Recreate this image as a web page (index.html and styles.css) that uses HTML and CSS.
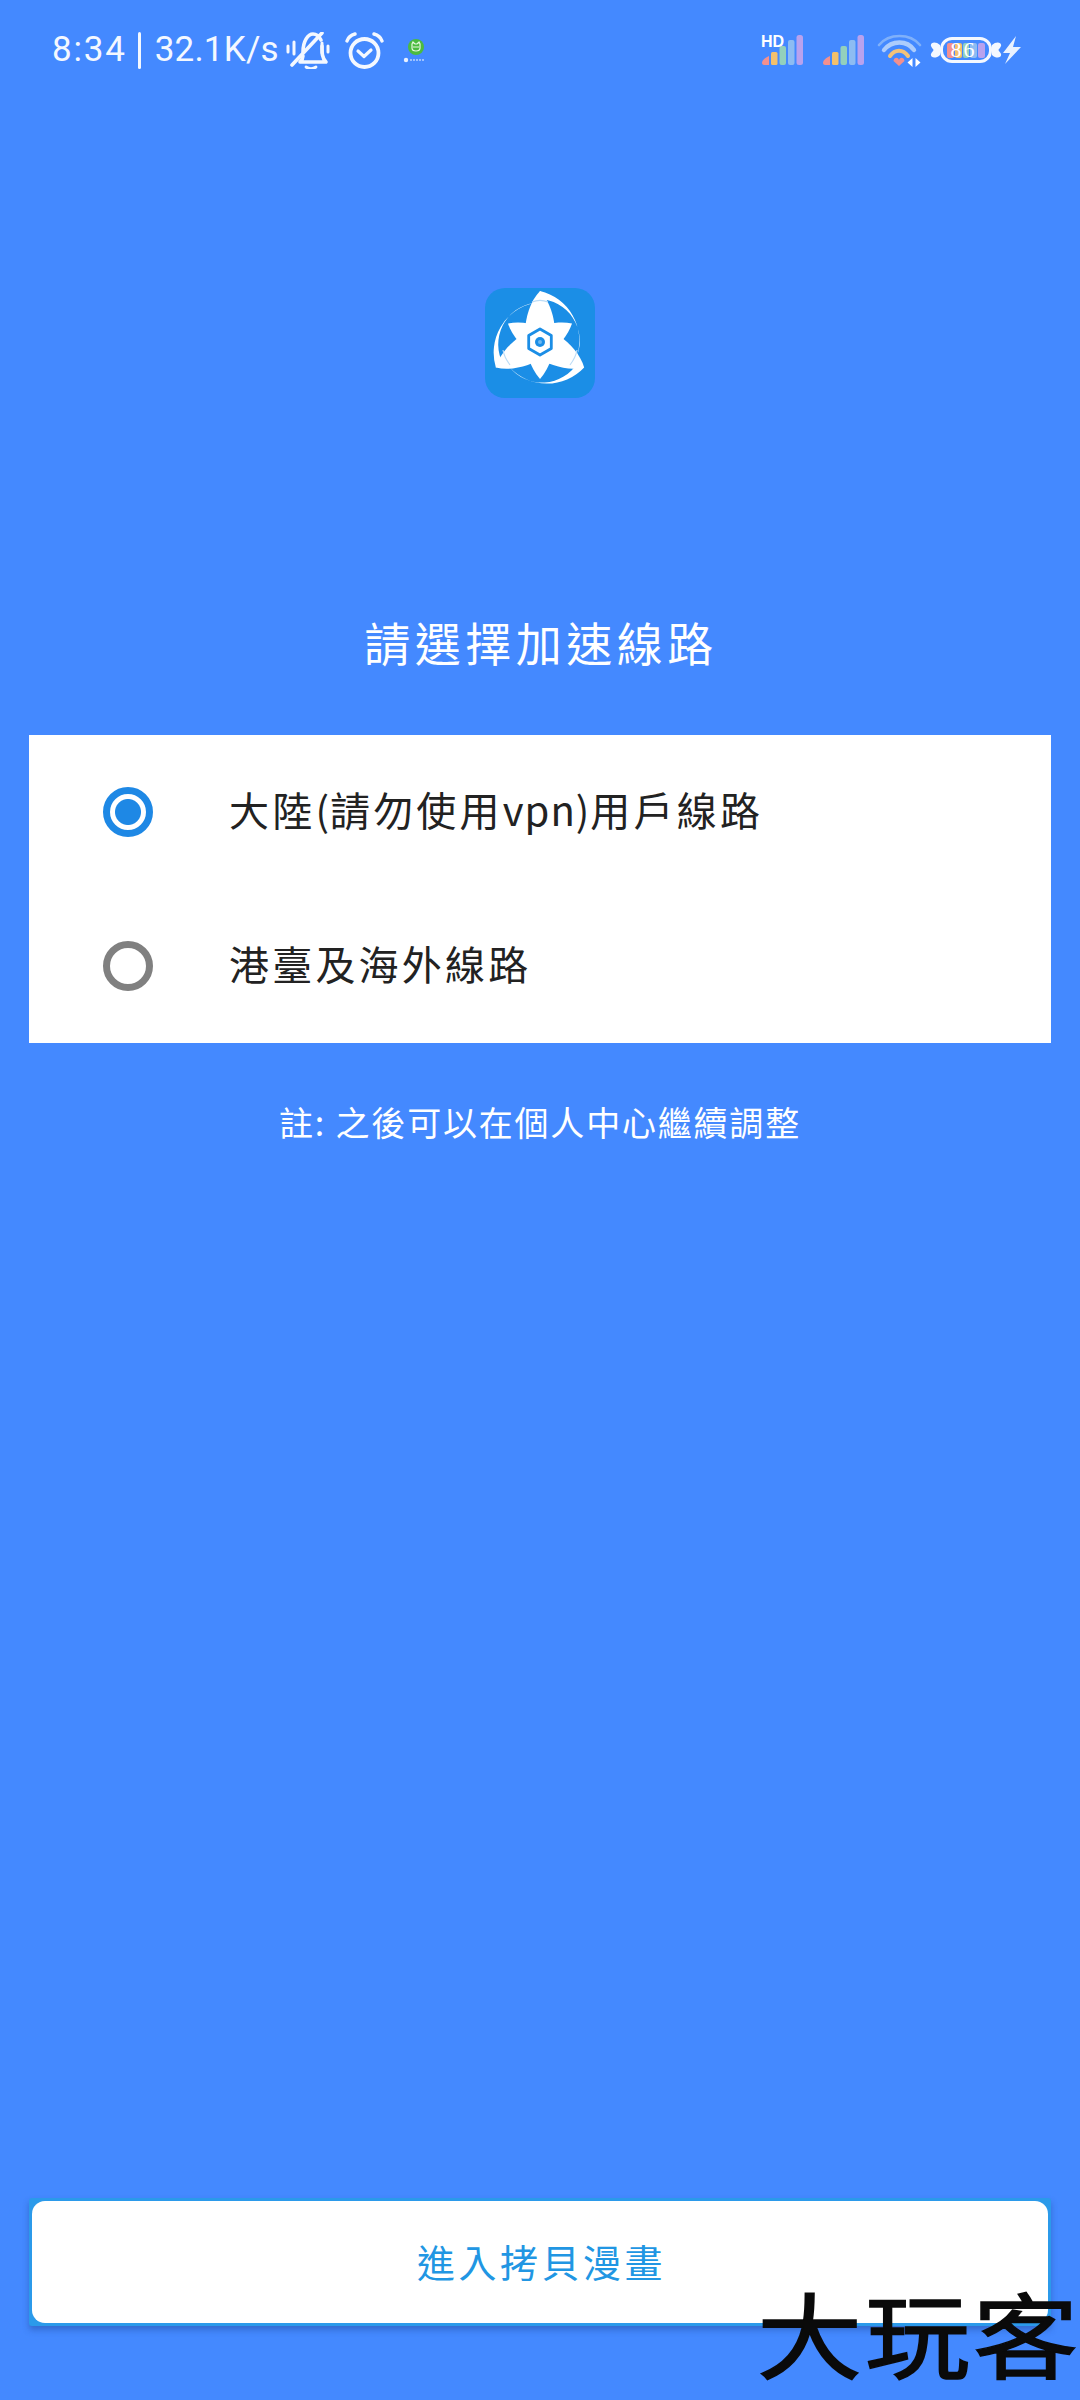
FILE: index.html
```html
<!DOCTYPE html>
<html lang="zh-Hant">
<head>
<meta charset="UTF-8">
<title>請選擇加速線路</title>
<link rel="stylesheet" href="styles.css">
</head>
<body>
<main class="screen">

<header class="statusbar">
  <div class="status-left">
    <span class="clock">8:34</span>
    <span class="divider"></span>
    <span class="speed">32.1K/s</span>
    <svg class="ico-bell" viewBox="0 0 44 37" fill="none" stroke="#f4f8ff" stroke-width="3.600" stroke-linecap="round" stroke-linejoin="round">
      <path d="M17 20 C17 9 22 2 27 2 C30 2 33 4 35 8"/>
      <path d="M36 14 C36 21 36 26 40 30 H14 C16 28 17 26 17 24"/>
      <path d="M20 35 C23 37 27 37 30 35" stroke-width="2.800"/>
      <path d="M6 33 L36 1"/>
      <path d="M2 14 V20 M8 10 V22 M36 11 V21 M42 14 V20" stroke-width="3"/>
    </svg>
    <svg class="ico-alarm" viewBox="0 0 39 37" fill="none" stroke="#f4f8ff" stroke-linecap="round" stroke-linejoin="round">
      <circle cx="19.500" cy="21" r="14" stroke-width="3.800"/>
      <path d="M13 19 L19 24.500 L26 18" stroke-width="3.200"/>
      <path d="M2 9 C3 6 6 3 10 2 M29 2 C33 3 36 6 37 9" stroke-width="3.400"/>
    </svg>
    <svg class="ico-app" viewBox="0 0 24 28">
      <circle cx="13" cy="8" r="8" fill="#4cbb3f"/>
      <path d="M9 5 L10 3 L12 5 H14 L16 3 L17 5 V9 C17 11 15 12 13 12 C11 12 9 11 9 9 Z M10 8 H16" fill="none" stroke="#e8f8e0" stroke-width="1.200"/>
      <circle cx="3" cy="21" r="2.200" fill="#e8f0ff"/>
      <path d="M7 21 H22" stroke="#b8d2ff" stroke-width="1.500" stroke-dasharray="2 1"/>
    </svg>
  </div>
  <div class="status-right">
    <div class="signal signal-hd">
      <span class="hd">HD</span>
      <svg viewBox="0 0 41 30">
        <path d="M0 28 C0 25 3 23 7 21 V30 H2 C1 30 0 29 0 28 Z" fill="#f2908f"/>
        <rect x="9" y="17" width="6.500" height="13" rx="1.500" fill="#f3c06c"/>
        <rect x="17.500" y="11" width="6.500" height="19" rx="2" fill="#93d0bc"/>
        <rect x="26" y="5" width="6.500" height="25" rx="2" fill="#8dbcf2"/>
        <rect x="34.500" y="0" width="6.500" height="30" rx="2.500" fill="#b9a2ee"/>
      </svg>
    </div>
    <div class="signal">
      <svg viewBox="0 0 41 30">
        <path d="M0 28 C0 25 3 23 7 21 V30 H2 C1 30 0 29 0 28 Z" fill="#f2908f"/>
        <rect x="9" y="17" width="6.500" height="13" rx="1.500" fill="#f3c06c"/>
        <rect x="17.500" y="11" width="6.500" height="19" rx="2" fill="#93d0bc"/>
        <rect x="26" y="5" width="6.500" height="25" rx="2" fill="#8dbcf2"/>
        <rect x="34.500" y="0" width="6.500" height="30" rx="2.500" fill="#b9a2ee"/>
      </svg>
    </div>
    <svg class="ico-wifi" viewBox="0 0 45 33" fill="none" stroke-linecap="round">
      <path d="M2 11 C12 -1 33 -1 43 11" stroke="#7fb0fa" stroke-width="2.600"/>
      <path d="M7 16 C15 6 30 6 37 16" stroke="#acccfc" stroke-width="4.400"/>
      <path d="M13 22 C18 15 26 15 31 22" stroke="#f3c27a" stroke-width="4"/>
      <path d="M22 32 L16.500 27 C17 23 21 23 22 26 C23 23 27 23 27.500 27 Z" fill="#f2908f"/>
      <path d="M35.500 24 V33 L30.500 28.500 Z M38.500 24 V33 L43.500 28.500 Z" fill="#fff"/>
    </svg>
    <div class="battery">
      <svg class="wrap" viewBox="0 0 10 16"><path d="M10 3 C6 -1 0 0 1 4 C1.500 6 3.500 7 3.500 8 C3.500 9 1.500 10 1 12 C0 16 6 17 10 13 Z" fill="#f4f8ff"/></svg>
      <div class="battery-body">
        <i class="stripe s1"></i><i class="stripe s2"></i><i class="stripe s3"></i><i class="stripe s4"></i><i class="stripe s5"></i>
        <span class="level">86</span>
      </div>
      <svg class="wrap" viewBox="0 0 10 16"><path d="M0 3 C4 -1 10 0 9 4 C8.500 6 6.500 7 6.500 8 C6.500 9 8.500 10 9 12 C10 16 4 17 0 13 Z" fill="#f4f8ff"/></svg>
    </div>
    <svg class="ico-bolt" viewBox="0 0 20 28">
      <path d="M14 0 L1 17 L8 17 L3 28 L19 11 L11 11 Z" fill="#eaf2ff"/>
    </svg>
  </div>
</header>

<div class="logo">
  <svg viewBox="0 0 110 110" width="110" height="110">
    <rect width="110" height="110" rx="20" fill="#1b8ee6"/>
    <g fill="#fff">
      <path d="M55 3 A51 51 0 0 1 92 68 A42 42 0 0 0 54 11 Z"/>
      <path d="M55 3 A51 51 0 0 1 92 68 A42 42 0 0 0 54 11 Z" transform="rotate(120 55 54)"/>
      <path d="M55 3 A51 51 0 0 1 92 68 A42 42 0 0 0 54 11 Z" transform="rotate(240 55 54)"/>
      <!-- each petal is long on one end (reaches a crescent) and short on the other -->
      <path d="M55 3 C75 24 75 68 55 91 C35 68 35 24 55 3 Z"/>
      <path d="M55 3 C75 24 75 68 55 91 C35 68 35 24 55 3 Z" transform="rotate(120 55 54)"/>
      <path d="M55 3 C75 24 75 68 55 91 C35 68 35 24 55 3 Z" transform="rotate(240 55 54)"/>
    </g>
    <path d="M47 14 C52 12 58 12 63 14 M92 62 C91 68 88 73 85 77 M25 77 C22 73 19 68 18 62" fill="none" stroke="#bcdcf6" stroke-width="1.200"/>
    <path d="M55 41 L66.300 47.500 L66.300 60.500 L55 67 L43.700 60.500 L43.700 47.500 Z" fill="#fff" stroke="#1b8ee6" stroke-width="2.800" stroke-linejoin="round"/>
    <circle cx="55" cy="54" r="5" fill="#1b8ee6"/>
    <circle cx="55" cy="54" r="2" fill="#6db8f0"/>
  </svg>
</div>

<h1 class="title">請選擇加速線路</h1>

<section class="lines">
  <div class="line">
    <span class="radio radio-on"></span>
    <span class="line-name">大陸<span class="latin">(</span>請勿使用<span class="latin">vpn)</span>用戶線路</span>
  </div>
  <div class="line">
    <span class="radio"></span>
    <span class="line-name">港臺及海外線路</span>
  </div>
</section>

<p class="note">註: 之後可以在個人中心繼續調整</p>

<button type="button" class="enter"><span class="enter-inner">進入拷貝漫畫</span></button>

<div class="watermark"><span>大</span><span>玩</span><span>客</span></div>

</main>
</body>
</html>
```

FILE: styles.css
```css
* {
  box-sizing: border-box;
}

body {
  margin: 0;
  background: #4489ff;
  font-family: "Noto Sans CJK TC", "Noto Sans", sans-serif;
}

.screen {
  position: relative;
  display: flex;
  flex-direction: column;
  width: 1080px;
  height: 2400px;
  overflow: hidden;
  background: #4489ff;
}

/* status bar */
.statusbar {
  display: flex;
  justify-content: space-between;
  align-items: center;
  height: 100px;
  padding: 0 58px 0 52px;
  color: #f4f8ff;
}

.status-left,
.status-right {
  display: flex;
  align-items: center;
}

.clock,
.speed {
  font-family: Roboto, "Noto Sans", sans-serif;
  font-size: 35px;
  line-height: 40px;
}

.clock {
  letter-spacing: 1.800px;
}

.speed {
  letter-spacing: 0.200px;
}

.divider {
  width: 3px;
  height: 37px;
  margin: 0 14px 0 11px;
  background: #f4f8ff;
  border-radius: 2px;
}

.ico-bell {
  width: 44px;
  height: 37px;
  margin-left: 7px;
}

.ico-alarm {
  width: 39px;
  height: 37px;
  margin-left: 15px;
}

.ico-app {
  width: 24px;
  height: 28px;
  margin: 6px 0 0 19px;
}

.signal {
  position: relative;
  width: 43px;
  height: 30px;
  margin-right: 18px;
}

.signal svg {
  display: block;
  width: 43px;
  height: 30px;
}

.hd {
  position: absolute;
  left: 0;
  top: -1px;
  font-family: "Liberation Sans", sans-serif;
  font-size: 16px;
  font-weight: 700;
  line-height: 16px;
  color: #fff;
}

.ico-wifi {
  width: 45px;
  height: 33px;
  margin: 0 8px 0 -6px;
}

.battery {
  display: flex;
  align-items: center;
  width: 72px;
  height: 26px;
}

.wrap {
  flex: none;
  width: 10px;
  height: 16px;
}

.battery-body {
  position: relative;
  display: flex;
  flex: 1;
  gap: 1px;
  align-items: center;
  height: 26px;
  padding: 0 4px;
  border: 3px solid #f4f8ff;
  border-radius: 12px;
}

.stripe {
  flex: 1;
  height: 15px;
  border-radius: 2px;
}

.s1 { background: #f2908f; }
.s2 { background: #f3c06c; }
.s3 { background: #93d0bc; }
.s4 { background: #8dbcf2; }
.s5 { background: #b9a2ee; }

.level {
  position: absolute;
  left: 0;
  right: 5px;
  top: -3px;
  font-family: "Liberation Serif", serif;
  font-size: 22px;
  line-height: 26px;
  letter-spacing: 2px;
  text-align: center;
  color: #fff;
}

.ico-bolt {
  width: 20px;
  height: 28px;
}

/* main content */
.logo {
  align-self: center;
  height: 110px;
  margin-top: 188px;
}

.logo svg {
  display: block;
}

.title {
  margin: 213px 0 0;
  padding-left: 2px;
  font-size: 46px;
  font-weight: 400;
  line-height: 60px;
  letter-spacing: 4.500px;
  text-align: center;
  color: #fff;
}

.lines {
  margin: 64px 29px 0;
  background: #fff;
}

.line {
  display: flex;
  align-items: center;
  height: 154px;
  padding-left: 74px;
}

.radio {
  flex: none;
  width: 50px;
  height: 50px;
  margin-right: 76px;
  border: 7px solid #808080;
  border-radius: 50%;
}

.radio-on {
  border-color: #1e88e5;
  background: radial-gradient(circle, #1e88e5 12.500px, #fff 13.500px);
}

.line-name {
  padding-bottom: 6px;
  font-size: 40px;
  letter-spacing: 3.200px;
  line-height: 56px;
  color: #222;
}

.latin {
  letter-spacing: 1px;
}

.note {
  margin: 54px 0 0;
  font-size: 34px;
  line-height: 50px;
  letter-spacing: 1.800px;
  text-align: center;
  color: #fff;
}

.enter {
  display: block;
  width: 1022px;
  height: 128px;
  margin: auto 29px 74px;
  padding: 3px;
  border: 0;
  border-radius: 3px;
  background: #2b9aea;
  box-shadow: 0 4px 6px rgba(30, 70, 150, 0.45);
  font-family: inherit;
}

.enter-inner {
  display: flex;
  align-items: center;
  justify-content: center;
  height: 100%;
  padding: 0 0 4px 3px;
  background: #fff;
  border-radius: 13px;
  font-size: 38px;
  letter-spacing: 3.500px;
  color: #2196e3;
}

/* sits on top of the button */
.watermark {
  position: absolute;
  right: 8px;
  top: 2285px;
  display: flex;
  gap: 15px;
  font-size: 93px;
  line-height: 93px;
  -webkit-text-stroke: 1.500px #0a0a0a;
  color: #0a0a0a;
}

.watermark span {
  transform: scaleX(1.13);
}
```
